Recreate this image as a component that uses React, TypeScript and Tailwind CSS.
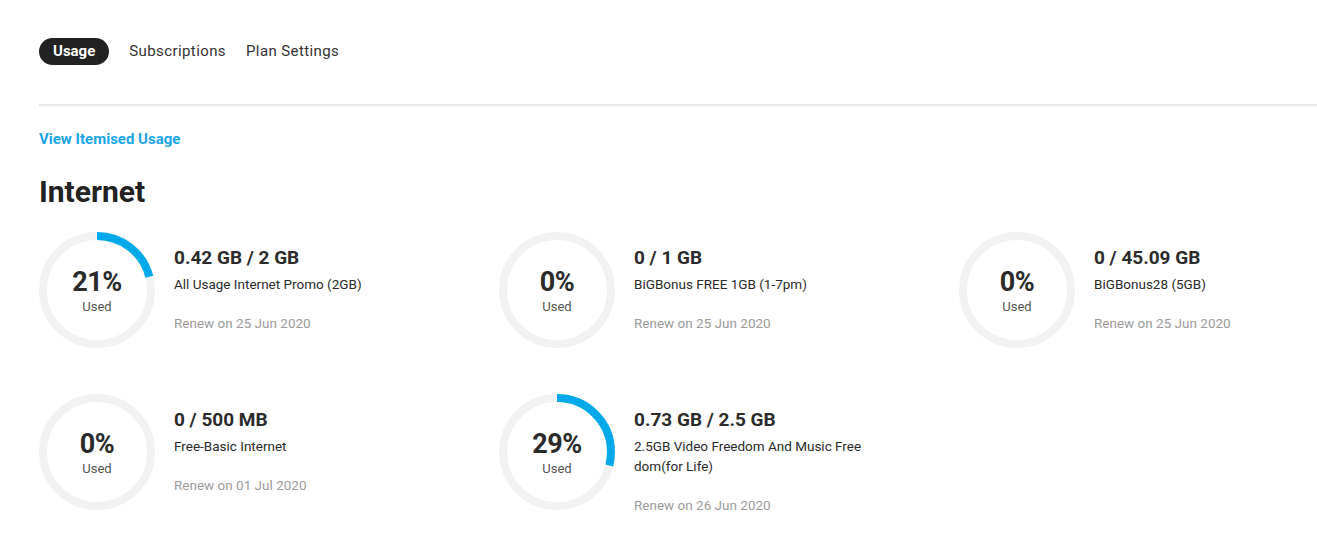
import React from 'react';

interface UsageItem {
  pct: number;
  amount: string;
  name: string;
  renew: string;
}

const ROW_ONE: UsageItem[] = [
  { pct: 21, amount: '0.42 GB / 2 GB', name: 'All Usage Internet Promo (2GB)', renew: 'Renew on 25 Jun 2020' },
  { pct: 0, amount: '0 / 1 GB', name: 'BiGBonus FREE 1GB (1-7pm)', renew: 'Renew on 25 Jun 2020' },
  { pct: 0, amount: '0 / 45.09 GB', name: 'BiGBonus28 (5GB)', renew: 'Renew on 25 Jun 2020' },
];

const ROW_TWO: UsageItem[] = [
  { pct: 0, amount: '0 / 500 MB', name: 'Free-Basic Internet', renew: 'Renew on 01 Jul 2020' },
  { pct: 29, amount: '0.73 GB / 2.5 GB', name: '2.5GB Video Freedom And Music Freedom(for Life)', renew: 'Renew on 26 Jun 2020' },
];

const Ring: React.FC<{ pct: number }> = ({ pct }) => {
  const r = 54;
  const c = 2 * Math.PI * r;
  return (
    <div className="relative w-[116px] h-[116px] shrink-0">
      <svg width="116" height="116" viewBox="0 0 116 116" className="absolute inset-0">
        <circle cx="58" cy="58" r={r} fill="none" stroke="#f2f2f2" strokeWidth="8" />
        {pct > 0 && (
          <circle
            cx="58"
            cy="58"
            r={r}
            fill="none"
            stroke="#00a9e9"
            strokeWidth="8"
            strokeDasharray={`${(c * pct) / 100} ${c}`}
            transform="rotate(-90 58 58)"
          />
        )}
      </svg>
      <div className="absolute inset-0 flex flex-col items-center justify-center pt-[2px]">
        <span className="text-[27px] leading-[30px] font-bold text-[#2b2b2b] tracking-[-0.5px]">{pct}%</span>
        <span className="text-[13px] leading-[16px] text-[#555] mt-[2px]">Used</span>
      </div>
    </div>
  );
};

const UsageCard: React.FC<{ item: UsageItem }> = ({ item }) => (
  <div className="flex items-start gap-[19px]">
    <Ring pct={item.pct} />
    <div className="w-[232px] pt-[15px]">
      <div className="text-[19px] leading-[22px] font-bold text-[#2b2b2b]">{item.amount}</div>
      <div className="text-[13.5px] leading-[20px] text-[#2b2b2b] mt-[5px] break-all">{item.name}</div>
      <div className="text-[13.5px] leading-[18px] text-[#9b9b9b] mt-[20px]">{item.renew}</div>
    </div>
  </div>
);

export default function App() {
  return (
    <div className="min-h-screen bg-white pl-[39px] pt-[38px]" style={{ fontFamily: 'Roboto, "Noto Sans", sans-serif' }}>
      {/* Tabs */}
      <nav className="flex items-center gap-5 h-[27px]">
        <span className="h-[27px] px-[14px] rounded-full bg-[#222] text-white text-[15px] font-bold flex items-center">Usage</span>
        <span className="text-[15px] text-[#333] tracking-[0.4px]">Subscriptions</span>
        <span className="text-[15px] text-[#333] tracking-[0.4px]">Plan Settings</span>
      </nav>

      <div className="h-[2px] bg-[#e8e8e8] mt-[39px]" />

      <a className="block mt-[24px] text-[15px] font-bold text-[#1aa5e6] leading-[18px]">View Itemised Usage</a>

      <h2 className="mt-[26px] text-[30px] leading-[36px] font-bold text-[#222]">Internet</h2>

      <div className="mt-[22px] flex flex-col gap-[46px]">
        <div className="grid grid-cols-[460px_460px_1fr]">
          {ROW_ONE.map((item, i) => (
            <UsageCard key={i} item={item} />
          ))}
        </div>
        <div className="grid grid-cols-[460px_460px_1fr]">
          {ROW_TWO.map((item, i) => (
            <UsageCard key={i} item={item} />
          ))}
        </div>
      </div>
    </div>
  );
}
